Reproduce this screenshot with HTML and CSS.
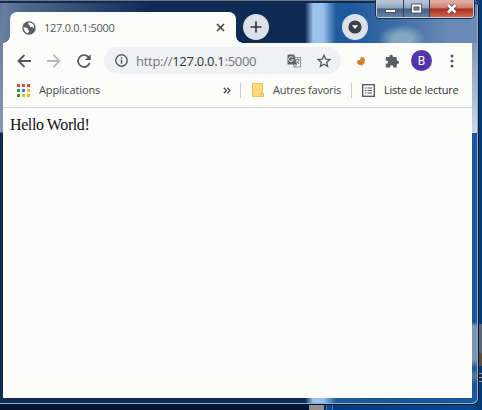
FILE: index.html
```html
<!DOCTYPE html>
<html lang="fr">
<head>
<meta charset="utf-8">
<title>127.0.0.1:5000</title>
<link rel="stylesheet" href="styles.css">
</head>
<body>
<div class="desktop-patch"></div>
<div class="desktop-lines"></div>
<div class="desktop-bottom"></div>
<div class="window">
  <div class="glass-patch"></div>
  <div class="caption">
    <span class="cap min"><svg width="26" height="17" viewBox="0 0 26 17"><rect x="8.500" y="9.500" width="10" height="3" fill="#fff" stroke="#4c5668"/></svg></span>
    <span class="cap max"><svg width="25" height="17" viewBox="0 0 25 17"><path d="M7.500 4h10v9h-10z" fill="#fff" stroke="#4c5668"/><rect x="10" y="7" width="5" height="3" fill="#75869f" stroke="#4c5668"/></svg></span>
    <span class="cap close"><svg width="43" height="17" viewBox="0 0 43 17"><path d="M18 5l7.500 7.500M25.500 5L18 12.500" stroke="#63404a" stroke-width="4.200"/><path d="M18 5l7.500 7.500M25.500 5L18 12.500" stroke="#fff" stroke-width="2.600"/></svg></span>
  </div>
  <div class="tabs">
    <div class="tab">
      <svg class="globe" width="14" height="14" viewBox="0 0 14 14"><circle cx="7" cy="7" r="6.700" fill="#5b6066"/><path d="M1.500 6.500C3.500 6 6 7 6 8.300c0 1.200 1.300.8 1 2-.2 1-.7 1.500-1.300 1.900C3.500 11.800 1.600 9.500 1.500 6.500zM6.500 1.600c2-.3 4.200.7 5.300 2.400.4 1.200.5 2.200.3 3.200-1-.1-1-1.100-2.100-1.200-1.400 0-2.500-.2-2.300-1.200.2-.8-.8-.6-1.200-1.400-.3-.7-.4-1.300 0-1.800z" fill="#fcfdfb"/></svg>
      <span class="tab-title">127.0.0.1:5000</span>
      <svg class="tab-close" width="9" height="9" viewBox="0 0 9 9"><path d="M1 1l7 7M8 1L1 8" stroke="#3c4043" stroke-width="1.500"/></svg>
    </div>
    <span class="round new-tab"><svg width="12" height="12" viewBox="0 0 12 12"><path d="M6 .5v11M.5 6h11" stroke="#303339" stroke-width="1.700"/></svg></span>
    <span class="round search-tab"><svg width="14" height="14" viewBox="0 0 14 14"><circle cx="7" cy="7" r="6.600" fill="#3b3e43"/><path d="M3.800 5.300h6.400L7 9z" fill="#fff"/></svg></span>
  </div>
  <div class="client">
    <div class="toolbar">
      <svg class="back" width="14" height="14" viewBox="0 0 14 14"><path d="M14 7H1.500M7.500 1L1.500 7l6 6" fill="none" stroke="#55585c" stroke-width="1.800"/></svg>
      <svg class="forward" width="14" height="14" viewBox="0 0 14 14"><path d="M0 7h12.500M6.500 1l6 6-6 6" fill="none" stroke="#b6b8ba" stroke-width="1.800"/></svg>
      <svg class="reload" width="14" height="14" viewBox="0 0 14 14"><path d="M12.600 9A5.900 5.900 0 1 1 11.200 2.900L12.500 4.500" fill="none" stroke="#55585c" stroke-width="1.800"/><path d="M13.700.2V6H8z" fill="#55585c"/></svg>
      <div class="omnibox">
        <svg class="info" width="13" height="13" viewBox="0 0 13 13"><circle cx="6.500" cy="6.500" r="5.700" fill="none" stroke="#55585c" stroke-width="1.400"/><path d="M6.500 5.700v4M6.500 3.200v1.500" stroke="#55585c" stroke-width="1.500"/></svg>
        <span class="url">http://<b>127.0.0.1</b>:5000</span>
        <svg class="translate" width="14" height="14" viewBox="0 0 14 14"><path d="M5 3.500h8.500v9.500H7z" fill="#f4f5f6" stroke="#85898e" stroke-width=".9"/><path d="M.5.500h6.700L10 10.500H.5z" fill="#62666b"/><path d="M6 3.800A2.400 2.400 0 1 0 6.300 5.800H4.200" fill="none" stroke="#e8eaec" stroke-width="1"/><path d="M8.500 5.500h4M10.500 4.500v1M12 6c-.4 2-1.500 3-2.700 4M9.500 6.800c.6 1.500 1.500 2.500 2.700 3.400M7 13l3-2.500" fill="none" stroke="#73777c" stroke-width=".9"/></svg>
        <svg class="star" width="14" height="14" viewBox="0 0 14 14"><path d="M7 1.300l1.700 3.800 4.200.4-3.200 2.800.9 4.200L7 10.300l-3.600 2.200.9-4.200L1.100 5.500l4.200-.4z" fill="none" stroke="#55585c" stroke-width="1.300"/></svg>
      </div>
      <svg class="cookie" width="10" height="10" viewBox="0 0 10 10"><path d="M5 .8C6.500.6 8 1.500 8.700 3 9.800 6 8 9.300 5 9.300 2.500 9.300.9 7.800.6 5.500L2.500 4l1.500.2L4.300 2.500z" fill="#d58a3b"/><path d="M3 5.500h1M6 3.500h1M5.500 6.500h1M3.500 7.500h1" stroke="#8c5a2b"/></svg>
      <svg class="puzzle" width="14" height="14" viewBox="0 0 14 14"><path d="M4.300 3v-.5a1.800 1.800 0 0 1 3.600 0V3h2.800c.7 0 1.100.4 1.100 1.100v2.400h.4a1.700 1.700 0 0 1 0 3.500h-.4v2.400c0 .7-.4 1.100-1.100 1.100H8.300v-.6a1.600 1.600 0 0 0-3.300 0v.6H1.800c-.7 0-1.100-.4-1.100-1.100V9.800h.6a1.700 1.700 0 0 0 0-3.400H.7V4.100C.7 3.400 1.100 3 1.800 3z" fill="#5b5e62"/></svg>
      <span class="avatar">B</span>
      <svg class="dots" width="4" height="14" viewBox="0 0 4 14"><g fill="#55585c"><circle cx="2" cy="2" r="1.500"/><circle cx="2" cy="7" r="1.500"/><circle cx="2" cy="12" r="1.500"/></g></svg>
    </div>
    <div class="bookmarks">
      <svg class="apps" width="13" height="13" viewBox="0 0 13 13"><path d="M0 0h3v3H0zM5 0h3v3H5zM10 0h3v3h-3z" fill="#e6483b"/><path d="M0 5h3v3H0z" fill="#2d9b57"/><path d="M5 5h3v3H5z" fill="#2b7de9"/><path d="M10 5h3v3h-3zM5 10h3v3H5zM10 10h3v3h-3z" fill="#f4b51d"/><path d="M0 10h3v3H0z" fill="#2d8b4f"/></svg>
      <span class="label apps-label">Applications</span>
      <svg class="more" width="8" height="7" viewBox="0 0 8 7"><path d="M.8.800l2.700 2.700L.8 6.200M4.300.800L7 3.500 4.300 6.200" fill="none" stroke="#4a4d51" stroke-width="1.300"/></svg>
      <i class="rule rule-one"></i>
      <svg class="folder" width="12" height="14" viewBox="0 0 12 14"><path d="M.5.500h10v9l1 1v3H.5z" fill="#fbdc82" stroke="#ebc552"/><path d="M9 13v-3h2" fill="none" stroke="#e5b83c"/></svg>
      <span class="label others-label">Autres favoris</span>
      <i class="rule rule-two"></i>
      <svg class="list" width="13" height="13" viewBox="0 0 13 13"><rect x=".7" y=".7" width="11.600" height="11.600" fill="none" stroke="#505357" stroke-width="1.300"/><path d="M3 4h1.500M3 6.500h1.500M3 9h1.500M5.500 4H10M5.500 6.500H10M5.500 9H10" stroke="#505357" stroke-width="1.200"/></svg>
      <span class="label reading-label">Liste de lecture</span>
    </div>
    <main>Hello World!</main>
  </div>
</div>
</body>
</html>
```
FILE: styles.css
```css
* { box-sizing: border-box; }
html { height: 100%; }
body {
  margin: 0;
  height: 410px;
  overflow: hidden;
  position: relative;
  background: linear-gradient(90deg, #021431 0 309px, #023b7c 325px, #034a90 470px, #023875);
}
svg { display: block; flex: none; }
.desktop-patch { position: absolute; left: 478px; top: 324px; width: 4px; height: 42px; background: linear-gradient(#596676 0 28px, #5b4c40 30px); }
.desktop-lines { position: absolute; left: 479px; top: 373px; width: 3px; height: 10px; background: repeating-linear-gradient(#8f9cab 0 1px, #142e4d 1px 4px); }
.desktop-bottom { position: absolute; left: 309px; top: 405px; width: 24px; height: 5px; background: linear-gradient(90deg, #928f8e 0 15px, #072c58 15px 17px, #387db7 17px 18px, #07488a 18px 23px, #387db7 23px); }
.window {
  position: relative;
  width: 479px;
  height: 405px;
  padding: 0 6px 0 3px;
  border-radius: 0 6px 6px 0;
  overflow: hidden;
  background:
    linear-gradient(180deg, transparent 0 43px, #7f98b9 43px, #cbd7e5 133px, transparent 133px) right / 7px 100% no-repeat,
    linear-gradient(180deg, #5c7798 0, #7187a7 65px, #8a98b0 132px, transparent 133px) left / 3px 100% no-repeat,
    linear-gradient(90deg, rgba(125,145,175,.85) 0, rgba(92,120,155,.8) 25px, transparent 150px) top / 100% 43px no-repeat,
    radial-gradient(ellipse 24px 14px at 402px 39px, rgba(168,197,207,.65) 0 40%, transparent) top / 100% 43px no-repeat,
    linear-gradient(90deg, transparent 350px, rgba(132,155,188,.75) 450px) top / 100% 43px no-repeat,
    linear-gradient(90deg, #0f2b54 0 305px, #9bc2eb 313px 323px, #1f5c9f 336px, #185499 400px, #1759a4 479px);
}
.window::after {
  content: "";
  position: absolute;
  inset: 0;
  border: 1px solid #05152b;
  border-left: 0;
  border-top: 1px solid #68788e;
  border-radius: 0 6px 6px 0;
  box-shadow: inset -1px -1px 0 #93adc8, inset 0 2px 0 #112b4c;
}
.glass-patch { position: absolute; left: 472px; top: 322px; width: 6px; height: 62px; background: linear-gradient(transparent, #7b94b0 4px 38px, #195aa5 46px, #597b9c 54px, transparent); }
.caption {
  position: absolute;
  z-index: 2;
  top: 0;
  left: 376px;
  display: flex;
  height: 18px;
  border: 1px solid #c2cddd;
  border-top: 0;
  border-radius: 0 0 4px 4px;
  box-shadow: 0 0 0 1px #1b2d4a;
  overflow: hidden;
}
.cap { background: linear-gradient(#b6c3d6 0 2px, #8fa2bd 8px, #455e83 9px, #6580a6); }
.max, .close { border-left: 1px solid #29405f; }
.close { background: linear-gradient(#dfaaa0 0 2px, #cf7867 8px, #a82f1d 9px, #d0674b); }
.tabs { display: flex; height: 43px; padding: 12px 0 0 7px; }
.tab {
  position: relative;
  display: flex;
  align-items: center;
  width: 226px;
  height: 31px;
  padding: 0 11px 0 12px;
  background: #fcfdfb;
  border-radius: 7px 7px 0 0;
}
.tab::before, .tab::after {
  content: "";
  position: absolute;
  bottom: 0;
  width: 7px;
  height: 7px;
}
.tab::before { left: -7px; background: radial-gradient(circle at 0 0, transparent 6.500px, #fcfdfb 7px); }
.tab::after { right: -7px; background: radial-gradient(circle at 100% 0, transparent 6.500px, #fcfdfb 7px); }
.tab-title { margin-left: 8px; font: 11px/16px "Open Sans", sans-serif; letter-spacing: -.28px; color: #54585c; white-space: nowrap; }
.tab-close { margin-left: auto; }
.round { display: flex; align-items: center; justify-content: center; width: 26px; height: 26px; margin-top: 2px; border-radius: 50%; background: #dce1e8; }
.new-tab { margin-left: 7px; }
.search-tab { margin-left: 73px; }
.client { height: 355px; width: 469px; background: #fcfdfb; }
.toolbar { display: flex; align-items: center; height: 35px; padding-left: 14px; }
.forward { margin-left: 16px; }
.reload { margin-left: 16px; }
.omnibox { display: flex; align-items: center; width: 237px; height: 27px; margin-left: 13px; padding-left: 11px; border-radius: 14px; background: #eff1f3; }
.url { width: 120px; margin-left: 8px; font: 13px/20px "Open Sans", sans-serif; letter-spacing: -.28px; color: #73777b; white-space: nowrap; }
.url b { font-weight: 400; color: #34373a; }
.translate { margin-left: 31px; }
.star { margin-left: 16px; }
.cookie { margin-left: 15px; }
.puzzle { margin-left: 19px; }
.avatar { display: grid; place-items: center; width: 21px; height: 21px; margin-left: 12px; border-radius: 50%; background: #5133ab; color: #fff; font: 12px/20px Roboto, sans-serif; }
.dots { margin-left: 18px; }
.bookmarks { display: flex; align-items: center; height: 30px; padding: 0 0 5px 14px; border-bottom: 1px solid #d5d8da; }
.label { font: 11px/16px "Open Sans", sans-serif; color: #45494d; white-space: nowrap; }
.apps-label { width: 62px; margin-left: 9px; letter-spacing: -.12px; }
.more { margin-left: 122px; }
.rule { width: 1px; height: 15px; background: #cbced1; }
.rule-one { margin-left: 9px; }
.folder { margin-left: 11px; }
.others-label { width: 69px; margin-left: 9px; letter-spacing: -.2px; }
.rule-two { margin-left: 9px; }
.list { margin-left: 10px; }
.reading-label { margin-left: 9px; letter-spacing: -.23px; color: #303336; }
main { padding: 8px 7px; font: 16px/18px "Liberation Serif", serif; letter-spacing: -.4px; color: #111; }
```
